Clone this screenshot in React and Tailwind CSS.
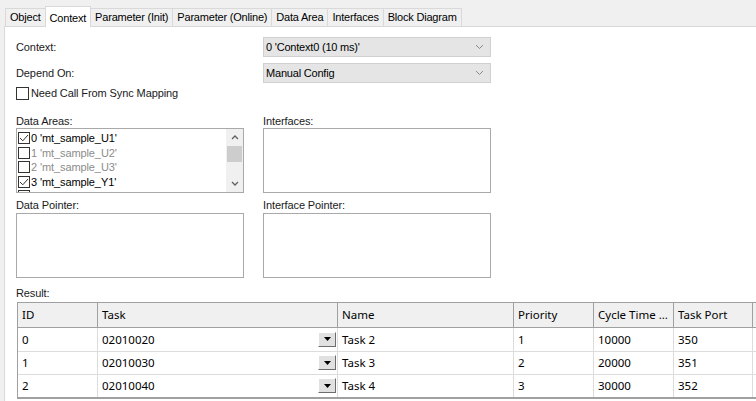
import React from 'react'

const tabs = ['Object', 'Context', 'Parameter (Init)', 'Parameter (Online)', 'Data Area', 'Interfaces', 'Block Diagram']

const areas = [
  { label: "0 'mt_sample_U1'", checked: true },
  { label: "1 'mt_sample_U2'", checked: false },
  { label: "2 'mt_sample_U3'", checked: false },
  { label: "3 'mt_sample_Y1'", checked: true },
  { label: "4 'mt_sample_Y2'", checked: false },
]

const rows = [
  ['0', '02010020', 'Task 2', '1', '10000', '350'],
  ['1', '02010030', 'Task 3', '2', '20000', '351'],
  ['2', '02010040', 'Task 4', '3', '30000', '352'],
]

function Chevron() {
  return (
    <svg width="9" height="6" viewBox="0 0 9 6" className="shrink-0">
      <path d="M1 1 L4.5 4.5 L8 1" fill="none" stroke="#8a8a8a" strokeWidth="1" />
    </svg>
  )
}

function Combo({ value }) {
  return (
    <div className="h-[20px] w-[228px] bg-[#e5e5e5] border border-[#d0d0d0] flex items-center justify-between pl-[2px] pr-[6px] text-[11px] tracking-[-0.2px] text-black">
      <span>{value}</span>
      <Chevron />
    </div>
  )
}

function Check({ checked, size = 13 }) {
  return (
    <div
      className="shrink-0 border border-[#333] bg-white flex items-center justify-center"
      style={{ width: size, height: size }}
    >
      {checked && (
        <svg width="10" height="8" viewBox="0 0 10 8">
          <path d="M1 4 L3.8 6.8 L9 1" fill="none" stroke="#333" strokeWidth="1" />
        </svg>
      )}
    </div>
  )
}

function Box({ children }) {
  return <div className="h-[65px] w-[228px] border border-[#a9a9a9] bg-white overflow-hidden">{children}</div>
}

function TaskButton() {
  return (
    <div className="w-[18px] h-[15px] bg-[#e1e1e1] border-t border-l border-t-white border-l-white border-b border-r border-b-[#6d6d6d] border-r-[#6d6d6d] flex items-center justify-center">
      <svg width="7" height="4" viewBox="0 0 7 4">
        <path d="M0 0 H7 L3.5 4 Z" fill="#000" />
      </svg>
    </div>
  )
}

export default function App() {
  const cols = ['w-[80px]', 'w-[240px]', 'w-[176px]', 'w-[80px]', 'w-[80px]', 'w-[79px]', 'w-[40px]']
  const heads = ['ID', 'Task', 'Name', 'Priority', 'Cycle Time ...', 'Task Port', '']

  return (
    <div className="w-[756px] h-[401px] overflow-hidden bg-[#f0f0f0] font-['Liberation_Sans',Arial,sans-serif] text-[11px] tracking-[-0.1px] text-[#1a1a1a]">
      {/* tab strip */}
      <div className="h-[26px] flex items-end pl-[5px] tracking-[-0.2px]">
        {tabs.map((t) =>
          t === 'Context' ? (
            <div
              key={t}
              className="h-[21px] px-[4px] bg-white border border-b-0 border-[#d9d9d9] -mb-px -ml-px relative z-10 flex items-start pt-[3px] text-black"
            >
              {t}
            </div>
          ) : (
            <div
              key={t}
              className="h-[18px] px-[4px] bg-[#f0f0f0] border border-b-0 border-[#d9d9d9] -ml-px first:ml-0 flex items-center text-black"
            >
              {t}
            </div>
          )
        )}
      </div>

      {/* page */}
      <div className="ml-[4px] h-[380px] bg-white border-l border-t border-[#d9d9d9] pl-[11px] pt-[10px]">
        <div className="flex gap-[19px] items-center">
          <div className="w-[228px]">Context:</div>
          <Combo value="0 'Context0 (10 ms)'" />
        </div>
        <div className="flex gap-[19px] items-center mt-[6px]">
          <div className="w-[228px]">Depend On:</div>
          <Combo value="Manual Config" />
        </div>
        <div className="flex items-center gap-[2px] mt-[3px] h-[14px]">
          <Check checked={false} />
          <span>Need Call From Sync Mapping</span>
        </div>

        <div className="flex gap-[19px] mt-[13px]">
          <div>
            <div className="h-[13px] mb-[2px]">Data Areas:</div>
            <Box>
              <div className="flex h-full">
                <div className="flex-1 pt-[2px] pl-[1px] overflow-hidden">
                  {areas.map((a) => (
                    <div key={a.label} className="h-[14.5px] flex items-center gap-[1px]">
                      <Check checked={a.checked} size={12} />
                      <span className={a.checked ? 'text-black' : 'text-[#8c8c8c]'}>{a.label}</span>
                    </div>
                  ))}
                </div>
                <div className="w-[17px] bg-[#f0f0f0] flex flex-col items-center">
                  <div className="h-[17px] flex items-center justify-center">
                    <svg width="8" height="5" viewBox="0 0 8 5">
                      <path d="M1 4 L4 1 L7 4" fill="none" stroke="#606060" strokeWidth="1.3" />
                    </svg>
                  </div>
                  <div className="w-[15px] h-[16px] bg-[#cdcdcd]" />
                  <div className="flex-1" />
                  <div className="h-[17px] flex items-center justify-center">
                    <svg width="8" height="5" viewBox="0 0 8 5">
                      <path d="M1 1 L4 4 L7 1" fill="none" stroke="#606060" strokeWidth="1.3" />
                    </svg>
                  </div>
                </div>
              </div>
            </Box>
          </div>
          <div>
            <div className="h-[13px] mb-[2px]">Interfaces:</div>
            <Box />
          </div>
        </div>

        <div className="flex gap-[19px] mt-[4px]">
          <div>
            <div className="h-[14px] mb-[2px]">Data Pointer:</div>
            <Box />
          </div>
          <div>
            <div className="h-[14px] mb-[2px]">Interface Pointer:</div>
            <Box />
          </div>
        </div>

        <div className="h-[14px] mt-[7px]">Result:</div>
        <div className="mt-[3px] ml-[1px] w-[800px] border-l border-t border-[#a0a0a0] font-['Noto_Sans','Open_Sans',sans-serif] text-[11.5px] tracking-normal text-black">
          <div className="flex h-[25px] bg-[#f0f0f0] border-b border-[#a0a0a0]">
            {heads.map((h, i) => (
              <div key={i} className={`${cols[i]} shrink-0 border-r border-[#a0a0a0] px-[4px] flex items-center whitespace-nowrap overflow-hidden`}>
                {h}
              </div>
            ))}
          </div>
          {rows.map((r, ri) => (
            <div key={ri} className={`flex h-[23.5px] ${ri === rows.length - 1 ? 'border-b-2 border-[#a0a0a0]' : 'border-b border-[#dcdcdc]'}`}>
              {r.map((c, ci) => (
                <div key={ci} className={`${cols[ci]} shrink-0 border-r border-[#dcdcdc] pl-[4px] flex items-center whitespace-nowrap ${ci === 1 ? 'justify-between pr-[1px]' : ''}`}>
                  <span>{c}</span>
                  {ci === 1 && <TaskButton />}
                </div>
              ))}
              <div className={`${cols[6]} shrink-0`} />
            </div>
          ))}
        </div>
      </div>
    </div>
  )
}
